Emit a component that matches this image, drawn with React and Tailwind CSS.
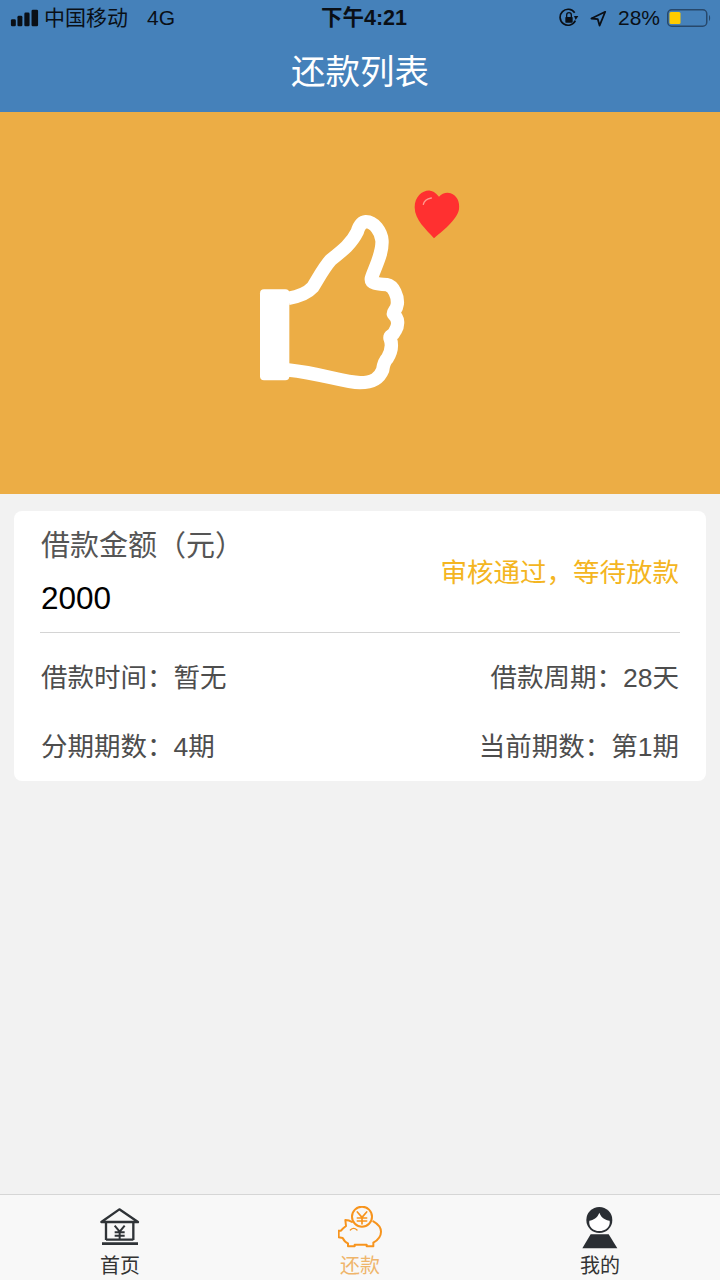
import React from "react";

function SignalBars() {
  return (
    <svg viewBox="30 25 87 55" className="w-[29px] h-[18px]" fill="#0a0f16">
      <rect x="32" y="56" width="15" height="22" rx="4" />
      <rect x="52" y="46" width="15" height="32" rx="4" />
      <rect x="73" y="36" width="16" height="42" rx="4" />
      <rect x="95" y="27" width="20" height="51" rx="4" />
    </svg>
  );
}

function RotationLock() {
  return (
    <svg viewBox="0 0 60 60" className="w-[20px] h-[20px]" fill="none" stroke="#0a0f16">
      <path d="M49 38 A24 24 0 1 1 47 14" strokeWidth="5" />
      <path d="M45 24 L58 24 L50 36 Z" fill="#0a0f16" stroke="none" />
      <rect x="19" y="27" width="22" height="17" rx="2" fill="#0a0f16" stroke="none" />
      <path d="M23 27 V21 A7 7 0 0 1 37 21 V27" strokeWidth="4" />
    </svg>
  );
}

function LocationArrow() {
  return (
    <svg viewBox="0 0 48 48" className="w-[17px] h-[17px]" fill="none" stroke="#0a0f16" strokeWidth="5" strokeLinejoin="round">
      <path d="M43 5 L4 24 L22 26 L27 44 Z" />
    </svg>
  );
}

function Battery() {
  return (
    <svg viewBox="0 0 44 18" className="w-[44px] h-[18px]">
      <rect x="0.75" y="0.75" width="39" height="16.5" rx="4" fill="none" stroke="#27486b" strokeWidth="1.5" />
      <rect x="2.5" y="3" width="11" height="12" rx="1.5" fill="#ffcc00" />
      <path d="M42 6 C43.5 7 43.5 11 42 12 Z" fill="#27486b" />
    </svg>
  );
}

function ThumbUp() {
  return (
    <svg viewBox="0 0 720 690" className="w-[240px] h-[230px]">
      <rect x="60" y="358" width="88" height="273" rx="12" fill="#fff" />
      <path
        d="M145 385 C175 380 200 372 218 352 C235 325 250 295 272 270 C310 240 335 220 352 185 Q360 157 378 155 C402 155 424 185 426 212 C428 250 408 285 394 325 C392 340 410 342 440 344 C462 348 474 380 472 402 C470 420 458 425 460 432 C476 445 476 465 466 482 C458 500 448 495 450 505 C458 525 454 545 442 565 C432 575 430 585 428 600 C418 625 400 638 360 638 C310 636 240 610 145 600"
        fill="none"
        stroke="#fff"
        strokeWidth="40"
        strokeLinejoin="round"
      />
      <path
        d="M582 205 C560 180 524 150 524 112 C524 80 548 60 570 62 C582 63 590 72 597 80 C606 70 620 66 632 70 C650 76 660 95 657 118 C652 150 605 185 582 205 Z"
        fill="#ff3030"
      />
      <path d="M550 103 Q553 88 574 84" fill="none" stroke="#ff9a8f" strokeWidth="4" strokeLinecap="round" />
    </svg>
  );
}

function HomeIcon() {
  return (
    <svg viewBox="54 48 132 132" className="w-[44px] h-[44px]" fill="none" stroke="#2f3337" strokeWidth="7">
      <path d="M64 96 L118 58 L174 96 Z" strokeLinejoin="round" />
      <path d="M78 96 V150 M160 96 V150 M78 149 H160" />
      <path d="M66 161 H174" strokeWidth="8" />
      <path d="M104 107 L119 125 L134 107 M119 125 V147 M104 127 H134 M104 137 H134" strokeWidth="6" />
    </svg>
  );
}

function PiggyIcon() {
  return (
    <svg viewBox="54 48 132 132" className="w-[44px] h-[44px]" fill="none" stroke="#f7941d" strokeWidth="6" strokeLinecap="round" strokeLinejoin="round">
      <circle cx="126" cy="80" r="30" />
      <path d="M112 66 L126 82 L140 66 M126 82 V102 M112 84 H140 M112 93 H140" strokeWidth="5" />
      <path d="M96 96 C90 92 84 90 76 90 L78 108 C70 114 66 118 63 122 L56 122 V142 L68 144 C72 152 78 158 84 160 V169 H104 V164 H140 V169 H160 V158 C174 150 183 140 183 125 C183 112 174 102 160 94" />
      <path d="M91 120 Q101 110 111 120" strokeWidth="4" />
    </svg>
  );
}

function PersonIcon() {
  return (
    <svg viewBox="54 48 132 132" className="w-[44px] h-[44px]">
      <circle cx="118" cy="90" r="39" fill="#2a2e33" />
      <path d="M88 92 C100 90 112 84 118 68 C124 84 136 90 149 92 C152 110 136 123 118 123 C100 123 85 110 88 92 Z" fill="#fff" />
      <path d="M92 133 H146 L172 175 H67 Z" fill="#2a2e33" />
    </svg>
  );
}

function Tab({ icon, label, active }) {
  return (
    <div className="flex-1 flex flex-col items-center pt-[11px]">
      {icon}
      <span className={active ? "mt-[4px] text-[20px] leading-[24px] text-[#efb56b]" : "mt-[4px] text-[20px] leading-[24px] text-[#333333]"}>
        {label}
      </span>
    </div>
  );
}

function InfoRow({ left, right }) {
  return (
    <div className="h-[69px] pt-[2px] px-[1px] flex items-center justify-between text-[26.5px] text-[#4d4d4d]">
      <span>{left}</span>
      <span>{right}</span>
    </div>
  );
}

export default function App() {
  return (
    <div className="w-[720px] h-[1280px] flex flex-col bg-[#f2f2f2] overflow-hidden font-['Liberation_Sans','Noto_Sans_CJK_SC',sans-serif]">
      <div className="bg-[#4581ba] h-[112px] shrink-0">
        {/* status bar */}
        <div className="h-[36px] flex items-center text-[21px] text-[#0a0f16]">
          <div className="w-[321px] pl-[10px] flex items-center">
            <SignalBars />
            <span className="ml-[5px]">中国移动</span>
            <span className="ml-[19px]">4G</span>
          </div>
          <span className="text-[21.5px] font-semibold">下午4:21</span>
          <div className="ml-auto pr-[9px] flex items-center">
            <RotationLock />
            <span className="ml-[11px] flex"><LocationArrow /></span>
            <span className="ml-[11px]">28%</span>
            <span className="ml-[7px] flex"><Battery /></span>
          </div>
        </div>
        <div className="h-[72px] pt-[2px] flex items-center justify-center text-[34.5px] text-white">还款列表</div>
      </div>

      <div className="h-[382px] shrink-0 bg-[#ecad45] flex items-center justify-center pb-[36px]">
        <ThumbUp />
      </div>

      <div className="flex-1">
        <div className="mx-[14px] mt-[17px] rounded-[8px] bg-white px-[26px]">
          <div className="h-[122px] border-b border-[#d4d4d4] flex justify-between">
            <div className="pt-[15px] pl-[1px]">
              <div className="text-[29px] leading-[40px] text-[#555555]">借款金额（元）</div>
              <div className="mt-[12px] text-[31.5px] leading-[40px] text-black">2000</div>
            </div>
            <div className="self-center pt-[5px] pr-[1px] text-[26.5px] text-[#f4b521]">审核通过，等待放款</div>
          </div>
          <div className="pt-[10px]">
            <InfoRow left="借款时间：暂无" right="借款周期：28天" />
            <InfoRow left="分期期数：4期" right="当前期数：第1期" />
          </div>
        </div>
      </div>

      <div className="h-[86px] shrink-0 flex bg-[#f8f8f8] border-t border-[#d6d6d6]">
        <Tab icon={<HomeIcon />} label="首页" />
        <Tab icon={<PiggyIcon />} label="还款" active />
        <Tab icon={<PersonIcon />} label="我的" />
      </div>
    </div>
  );
}
